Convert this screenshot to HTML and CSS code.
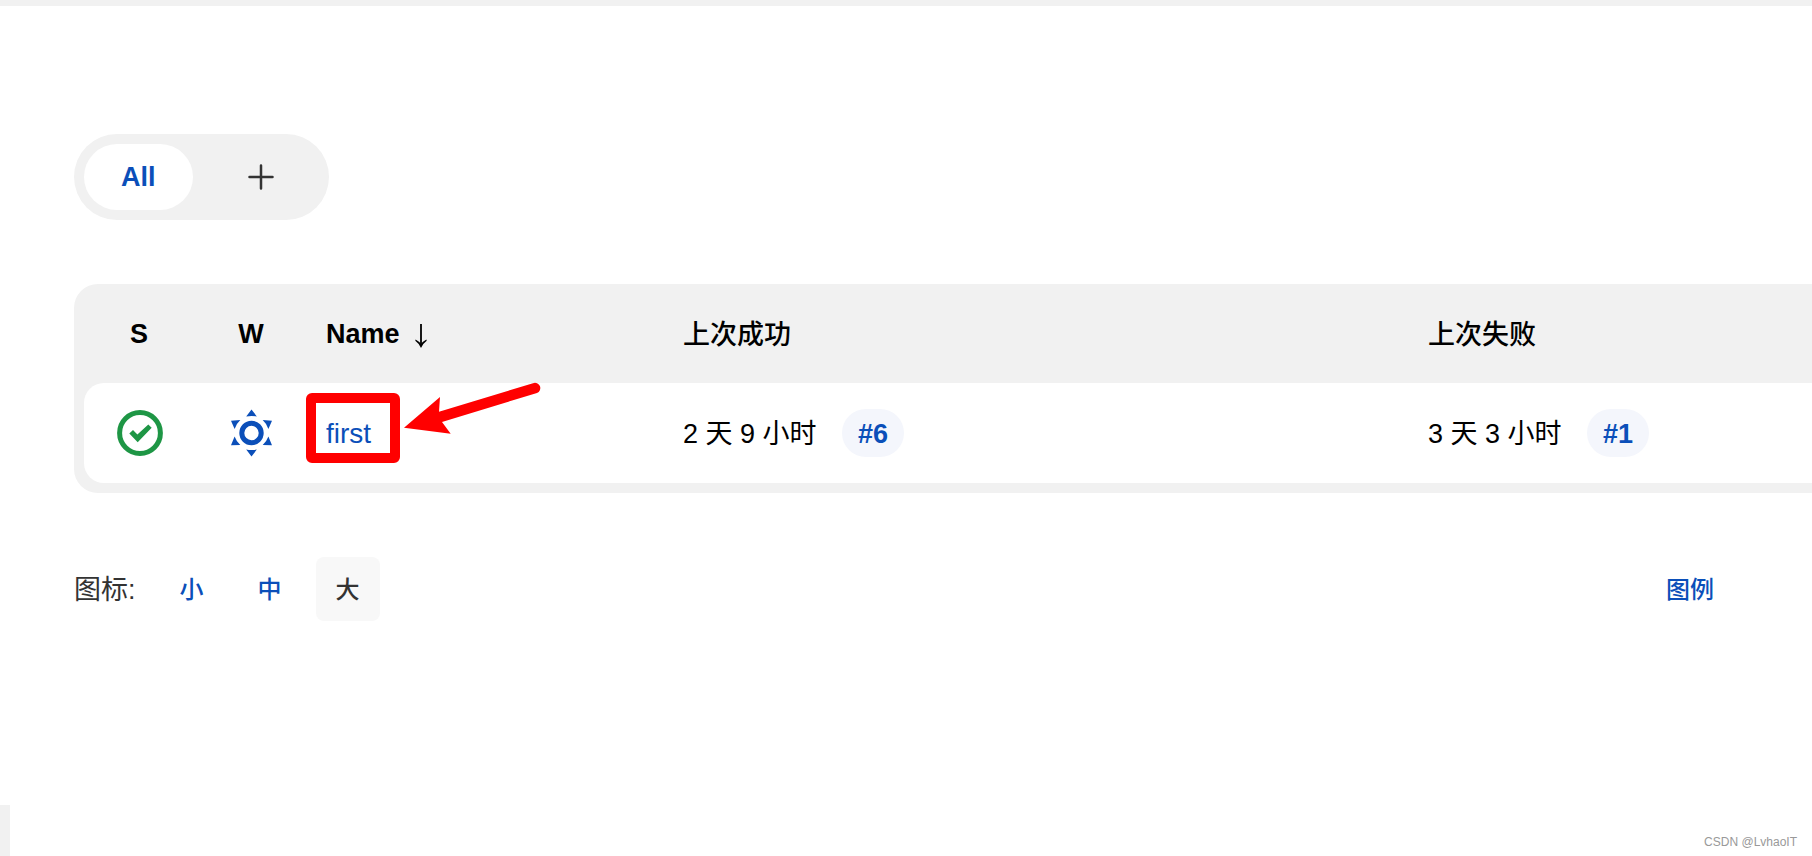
FILE: index.html
```
<!DOCTYPE html>
<html lang="zh-CN">
<head>
    <meta charset="UTF-8">
    <title>Jenkins</title>
    <link rel="stylesheet" href="styles.css">
</head>
<body>
    <div class="top-line"></div>

    <main class="main-panel">
        <nav class="tab-bar">
            <a class="tab active" href="#all">All</a>
            <a class="tab tab-add" href="#new-view" aria-label="New view">
                <svg width="26" height="26" viewBox="0 0 26 26">
                    <path d="M13 1.5v23M1.5 13h23" fill="none" stroke="#333" stroke-width="2.5" stroke-linecap="round"/>
                </svg>
            </a>
        </nav>

        <div class="table-wrapper">
            <table class="job-table">
                <colgroup>
                    <col class="col-status">
                    <col class="col-weather">
                    <col class="col-name">
                    <col class="col-success">
                    <col>
                </colgroup>
                <thead>
                    <tr>
                        <th class="center">S</th>
                        <th class="center">W</th>
                        <th>Name
                            <svg class="sort-arrow" width="12" height="26" viewBox="0 0 12 26">
                                <path d="M6 1v22" fill="none" stroke="#000" stroke-width="1.8"/>
                                <path d="M.6 16.6Q4 18.5 6 21q2-2.5 5.4-4.4l.3 1.2Q8 20.5 6 25 4 20.5.3 17.8z"/>
                            </svg>
                        </th>
                        <th class="zh">上次成功</th>
                        <th class="zh">上次失败</th>
                    </tr>
                </thead>
                <tbody>
                    <tr>
                        <td class="center">
                            <svg class="icon" width="48" height="48" viewBox="0 0 48 48">
                                <circle cx="25" cy="24" r="20.4" fill="none" stroke="#1e9645" stroke-width="5"/>
                                <path d="M14.3 24.6l3.7-3.7 4.4 4.5 10.9-10 3.4 3.4-14 14.4z" fill="#1e9645"/>
                            </svg>
                        </td>
                        <td class="center">
                            <svg class="icon" width="48" height="48" viewBox="0 0 48 48">
                                <circle cx="24.5" cy="24" r="9.7" fill="none" stroke="#0b4fb9" stroke-width="5"/>
                                <path d="M24.5 .4l5.3 7q-5.3-1-10.6 0z
                                         M24.5 47.6l5.3-7q-5.3 1-10.6 0z
                                         M4 11.7l9.3-.6q-3.9 3.6-5.7 9z
                                         M45 11.7l-9.3-.6q3.9 3.6 5.7 9z
                                         M4 36.3l9.3-.3q-3.9-3.4-5.7-8.4z
                                         M45 36.3l-9.3-.3q3.9-3.4 5.7-8.4z" fill="#0b4fb9"/>
                            </svg>
                        </td>
                        <td>
                            <div class="job-name">
                                <a class="job-link" href="#first">first</a>
                                <span class="mark-box"></span>
                                <svg class="mark-arrow" width="140" height="56" viewBox="0 0 140 56">
                                    <path d="M2 47.7L38 17l-1 14.7L131 3.2a5.2 5.2 0 0 1 4 9.8L40 42l8.7 11.7z" fill="#f00"/>
                                </svg>
                            </div>
                        </td>
                        <td>2 天 9 小时 <a class="build-link" href="#6">#6</a></td>
                        <td>3 天 3 小时 <a class="build-link" href="#1">#1</a></td>
                    </tr>
                </tbody>
            </table>
        </div>

        <div class="options">
            <span class="options-label">图标:</span>
            <div class="sizes">
                <button class="size">小</button>
                <button class="size">中</button>
                <button class="size selected">大</button>
            </div>
            <a class="legend" href="#legend">图例</a>
        </div>
    </main>

    <footer class="page-footer">
        <div class="footer-edge"></div>
        <span class="watermark">CSDN @LvhaoIT</span>
    </footer>
</body>
</html>
```
FILE: styles.css
```
* {
    box-sizing: border-box;
}
body {
    display: flex;
    flex-direction: column;
    min-height: 100vh;
    margin: 0;
    background: #fff;
    color: #000;
    font-family: "Liberation Sans", "Noto Sans CJK SC", sans-serif;
    font-size: 27px;
}
a {
    color: #0b4fb9;
    text-decoration: none;
}
.top-line {
    height: 6px;
    background: #f1f1f1;
}
.main-panel {
    padding: 128px 74px 0;
}

/* tabs */
.tab-bar {
    display: inline-flex;
    padding: 10px;
    border-radius: 43px;
    background: #f1f1f1;
}
.tab {
    display: flex;
    align-items: center;
    justify-content: center;
    height: 66px;
    padding: 0 37px;
    border-radius: 33px;
    font-weight: bold;
}
.tab.active {
    background: #fff;
}
.tab-add {
    padding: 0 45px 0 55px;
}

/* job table, open towards the right edge */
.table-wrapper {
    margin: 64px -74px 0 0;
    padding: 0 0 10px 10px;
    border-radius: 24px 0 0 24px;
    background: #f1f1f1;
}
.job-table {
    width: 100%;
    table-layout: fixed;
    border-collapse: separate;
    border-spacing: 0;
}
.col-status {
    width: 110px;
}
.col-weather {
    width: 114px;
}
.col-name {
    width: 357px;
}
.col-success {
    width: 745px;
}
th,
td {
    padding: 0 18px;
    text-align: left;
    white-space: nowrap;
}
th {
    height: 99px;
    padding-top: 2px;
    font-weight: bold;
}
th.zh {
    padding-top: 0;
    padding-bottom: 2px;
    font-weight: 500;
}
td {
    height: 100px;
    background: #fff;
}
td:first-child {
    border-radius: 20px 0 0 20px;
}
.center {
    padding-left: 0;
    padding-right: 0;
    text-align: center;
}
.icon {
    display: block;
    margin: 0 auto;
}
.sort-arrow {
    margin-left: 8px;
    vertical-align: middle;
}
.job-name {
    display: inline-block;
    position: relative;
    padding-top: 2px;
    font-size: 28px;
    line-height: 32px;
}
.build-link {
    display: inline-block;
    margin-left: 18px;
    padding: 2px 16px 0;
    border-radius: 24px;
    background: #f4f6fc;
    font-weight: bold;
    line-height: 46px;
}

/* red marks around the job link */
.mark-box {
    position: absolute;
    top: -23px;
    left: -20px;
    width: 94px;
    height: 70px;
    border: 10px solid #f00;
    border-radius: 6px;
}
.mark-arrow {
    position: absolute;
    top: -36px;
    left: 76px;
}

/* icon size and legend */
.options {
    display: flex;
    align-items: center;
    margin-top: 64px;
    color: #333;
}
.options-label {
    padding-bottom: 3px;
}
.sizes {
    display: flex;
    gap: 14px;
    margin-left: 24px;
}
.size {
    width: 64px;
    height: 64px;
    padding: 0 0 3px;
    border: none;
    border-radius: 8px;
    background: none;
    color: #0b4fb9;
    font-family: inherit;
    font-size: 24px;
    font-weight: 500;
    cursor: pointer;
}
.size.selected {
    background: #f8f8f8;
    color: #333;
}
.legend {
    margin-left: auto;
    padding: 0 24px 3px;
    font-size: 24px;
    font-weight: 500;
}

.page-footer {
    display: flex;
    align-items: flex-end;
    justify-content: space-between;
    margin-top: auto;
}
.footer-edge {
    width: 10px;
    height: 51px;
    background: #f1f1f1;
}
.watermark {
    padding: 0 15px 7px 0;
    color: #999;
    font-size: 12px;
}
```
